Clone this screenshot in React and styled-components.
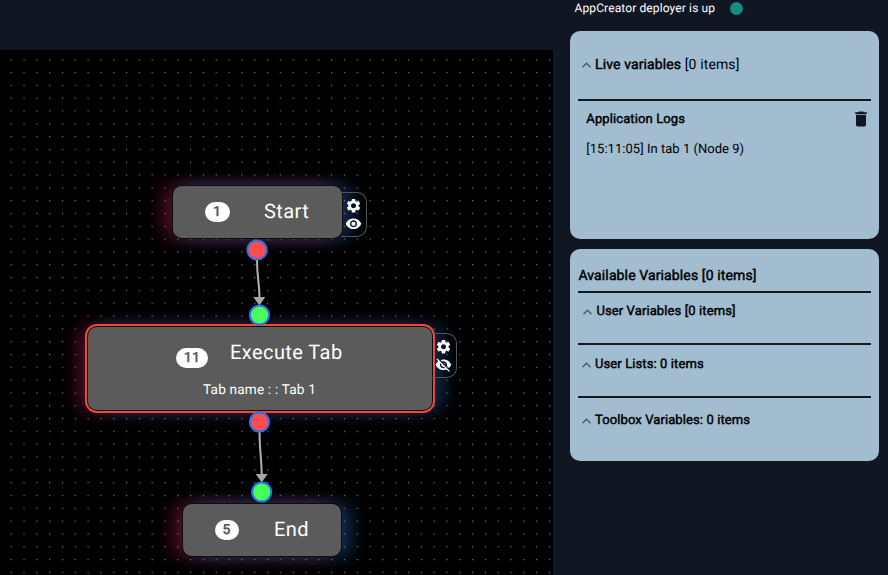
import React from "react";
import styled, { createGlobalStyle } from "styled-components";
import { MdSettings, MdVisibility, MdVisibilityOff, MdDelete } from "react-icons/md";

const GlobalStyle = createGlobalStyle`
  * { box-sizing: border-box; }
  body { margin: 0; background: #101723; font-family: Roboto, sans-serif; overflow: hidden; text-rendering: geometricPrecision; }
`;

const Page = styled.div`
  display: grid;
  grid-template-columns: 553px 1fr;
  width: 888px;
  height: 575px;
  background: #101723;
`;

const Workspace = styled.main`
  display: flex;
  flex-direction: column;
  padding-top: 50px;
  height: 575px;
`;

const Canvas = styled.div`
  position: relative;
  flex: 1;
  overflow: hidden;
  background: #000;
`;

const CanvasLayer = styled.svg`
  position: absolute;
  inset: 0;
  width: 100%;
  height: 100%;
`;

const Node = styled.div`
  position: absolute;
  left: ${(p) => p.$x}px;
  top: ${(p) => p.$y}px;
  width: ${(p) => p.$w}px;
  height: ${(p) => p.$h}px;
  border-radius: 10px;
  box-shadow: 9.5px 0 17px rgba(42, 138, 246, 0.32), -9.5px 0 17px rgba(233, 42, 103, 0.32);
`;

const NodeBody = styled.div`
  position: relative;
  display: flex;
  flex-direction: column;
  height: 100%;
  padding-top: ${(p) => p.$top}px;
  border: 1px solid #0c0c0c;
  border-radius: 10px;
  background: #5b5b5b;
  color: #fff;
  ${(p) => p.$selected && "outline: 2px solid #f4472f; outline-offset: 0.5px;"}
`;

const Heading = styled.div`
  display: flex;
  align-items: center;
  height: 28px;
  padding-left: ${(p) => p.$indent}px;
`;

const Badge = styled.span`
  display: flex;
  align-items: center;
  justify-content: center;
  width: ${(p) => p.$w}px;
  height: 20.5px;
  margin-top: ${(p) => p.$drop}px;
  border-radius: 11px;
  background: #fff;
  color: #555;
  font-size: 14px;
  font-weight: 500;
  letter-spacing: 0.3px;
  -webkit-text-stroke: 0.25px #555;
`;

const Title = styled.span`
  margin-left: ${(p) => p.$gap}px;
  font-size: 20px;
  line-height: 28px;
  letter-spacing: 0.43px;
  white-space: nowrap;
`;

const Detail = styled.div`
  margin-top: 15px;
  padding-left: 115px;
  font-size: 13.6px;
  line-height: 18px;
  letter-spacing: 0.19px;
  white-space: nowrap;
`;

const Tools = styled.div`
  position: absolute;
  top: ${(p) => p.$top}px;
  left: calc(100% - ${(p) => p.$overlap}px);
  display: flex;
  flex-direction: column;
  align-items: center;
  gap: 0;
  width: 26px;
  height: 45px;
  padding-top: 4px;
  border: 1px solid #555;
  border-left: 0;
  border-radius: 0 10px 10px 0;
  color: #fff;
  svg { width: 17px; height: 17.5px; flex: none; margin-right: 1px; }
`;

const Sidebar = styled.aside`
  display: flex;
  flex-direction: column;
  padding: 0 9px 0 17px;
  color: #000;
`;

const Status = styled.div`
  display: flex;
  align-items: center;
  gap: 15px;
  height: 16px;
  margin-bottom: 15px;
  padding-left: 4.5px;
  color: #fff;
  font-size: 12px;
  letter-spacing: 0.12px;
`;

const StatusDot = styled.i`
  width: 13px;
  height: 13px;
  border-radius: 50%;
  background: #168c83;
`;

const Panel = styled.section`
  height: ${(p) => p.$h}px;
  margin-bottom: 10px;
  padding: 0 8px;
  border-radius: 10px;
  background: #a2bdd0;
`;

const PanelRow = styled.div`
  display: flex;
  align-items: flex-start;
  height: ${(p) => p.$h}px;
  padding: ${(p) => p.$top}px 0 0 ${(p) => p.$indent || 0}px;
  font-size: ${(p) => p.$size || 13}px;
  line-height: 18px;
  letter-spacing: ${(p) => p.$track || 0}px;
  white-space: pre;
  ${(p) => p.$ruled && "border-bottom: 2px solid #101820;"}
`;

const Strong = styled.span`
  -webkit-text-stroke: 0.45px #000;
`;

const Caret = styled.svg`
  flex: none;
  width: 9px;
  height: 6px;
  margin: 5.5px 4.5px 0 -0.5px;
  fill: none;
  stroke: #4a5863;
  stroke-width: 1.3;
`;

const TrashButton = styled.button`
  display: flex;
  margin: -2px 0 0 auto;
  padding: 0;
  border: 0;
  background: none;
  color: #101723;
`;

const Chevron = () => (
  <Caret viewBox="0 0 9 6"><path d="M.5 5.2 4.5 1.2 8.5 5.2" /></Caret>
);

const ports = [
  { x: 257, y: 200, color: "#ff4c50" },
  { x: 259.5, y: 265, color: "#46ff5b" },
  { x: 259.5, y: 372, color: "#ff4c50" },
  { x: 261.7, y: 442, color: "#46ff5b" },
];

function FlowNode({ x, y, w, h, id, title, top, indent, badge, drop = 0, gap, detail, selected, tools, overlap = 0, hidden }) {
  return (
    <Node $x={x} $y={y} $w={w} $h={h}>
      <NodeBody $selected={selected} $top={top}>
        <Heading $indent={indent}>
          <Badge $w={badge} $drop={drop}>{id}</Badge>
          <Title $gap={gap}>{title}</Title>
        </Heading>
        {detail && <Detail>{detail}</Detail>}
      </NodeBody>
      {tools !== undefined && (
        <Tools $top={tools} $overlap={overlap}>
          <MdSettings />
          {hidden ? <MdVisibilityOff /> : <MdVisibility />}
        </Tools>
      )}
    </Node>
  );
}

export default function App() {
  return (
    <>
      <GlobalStyle />
      <Page>
        <Workspace>
          <Canvas>
            <CanvasLayer>
              <defs>
                <pattern id="dots" x="10.6" y="9.1" width="12.817" height="12.817" patternUnits="userSpaceOnUse">
                  <circle cx=".7" cy=".7" r=".65" fill="#919191" />
                </pattern>
              </defs>
              <rect width="553" height="525" fill="url(#dots)" />
            </CanvasLayer>
            <FlowNode x={172} y={135} w={170.5} h={54} id="1" title="Start" top={11} indent={32} badge={24.5} drop={2} gap={34.5} tools={7} overlap={1.5} />
            <FlowNode x={87} y={276} w={345.5} h={85} id="11" title="Execute Tab" top={11} indent={88} badge={32} drop={12} gap={22} detail="Tab name : : Tab 1" selected tools={7} overlap={1.5} hidden />
            <FlowNode x={182} y={453} w={159.5} h={54} id="5" title="End" top={11} indent={31.5} badge={24.5} drop={2} gap={35} />
            <CanvasLayer>
              <g fill="none" stroke="#b1b1b7" strokeWidth="2">
                <path d="M257 210C257 228 259.5 232 259.5 249" />
                <path d="M259.5 382C259.5 402 261.7 408 261.7 426" />
              </g>
              <g fill="#a5a5ab">
                <path d="M253.3 247h12l-6 8.5Z" />
                <path d="M255.7 424h12l-6 8.5Z" />
              </g>
              {ports.map((p) => (
                <circle key={p.y} cx={p.x} cy={p.y} r="9.6" fill={p.color} stroke="#2875e8" strokeWidth="2" />
              ))}
            </CanvasLayer>
          </Canvas>
        </Workspace>
        <Sidebar>
          <Status>AppCreator deployer is up<StatusDot /></Status>
          <Panel $h={208}>
            <PanelRow $h={70} $top={25} $indent={4} $size={14} $track={0.12} $ruled>
              <Chevron /><Strong>Live variables</Strong> [0 items]
            </PanelRow>
            <PanelRow $h={40} $top={10} $indent={8.3} $track={0.11}>
              <Strong>Application Logs</Strong>
              <TrashButton aria-label="Clear logs"><MdDelete size={20} /></TrashButton>
            </PanelRow>
            <PanelRow $h={30} $top={0} $indent={8.3} $size={13} $track={0.03}>[15:11:05] In tab 1 (Node 9)</PanelRow>
          </Panel>
          <Panel $h={212}>
            <PanelRow $h={44} $top={18} $indent={0.4} $size={14} $track={0.12} $ruled><Strong>Available Variables [0 items]</Strong></PanelRow>
            <PanelRow $h={52} $top={10} $indent={5.4} $track={0.11} $ruled><Chevron /><Strong>User Variables [0 items]</Strong></PanelRow>
            <PanelRow $h={53} $top={11} $indent={4} $track={0.1} $ruled><Chevron /><Strong>User Lists: 0 items</Strong></PanelRow>
            <PanelRow $h={50} $top={14} $indent={4} $track={0.1}><Chevron /><Strong>Toolbox Variables: 0 items</Strong></PanelRow>
          </Panel>
        </Sidebar>
      </Page>
    </>
  );
}
